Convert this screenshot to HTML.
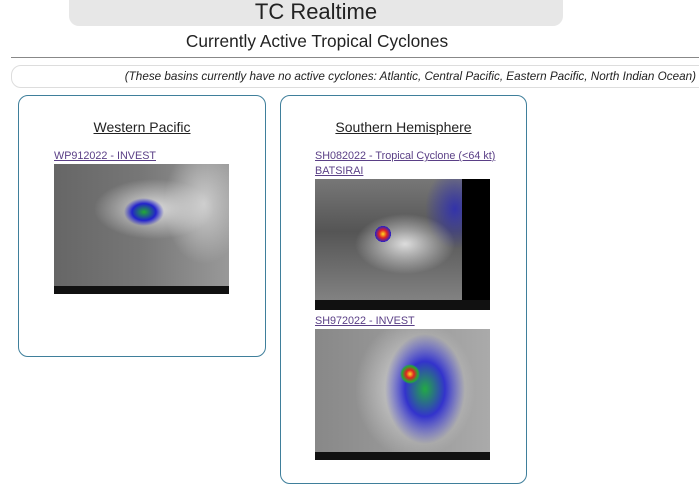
<!DOCTYPE html>
<html><head><style>
body{margin:0;width:699px;height:489px;background:#fff;font-family:"Liberation Sans",sans-serif;position:relative;overflow:hidden;color:#222}
.a{position:absolute}
.bar{left:69px;top:0;width:494px;height:26px;background:#e7e7e7;border-radius:0 0 10px 10px;text-align:center;font-size:22px;line-height:24px}
.sub{left:0;width:634px;top:31px;text-align:center;font-size:17.3px}
.hr{left:11px;top:57px;width:688px;height:1px;background:#888}
.note{left:11px;top:65px;width:700px;height:21px;border:1px solid #ddd;border-radius:10px;font-size:11.7px;font-style:italic;line-height:21px}
.note span{position:absolute;right:16px}
.card{border:1.5px solid #3f7f9b;border-radius:10px}
h2{position:absolute;margin:0;font-weight:normal;font-size:14px;text-decoration:underline;text-align:center;width:100%}
.lk{color:#5a3f86;text-decoration:underline;font-size:10.8px;line-height:15px}
.img{background:#555;overflow:hidden}
</style></head><body>
<div class="a bar">TC Realtime</div>
<div class="a sub">Currently Active Tropical Cyclones</div>
<div class="a hr"></div>
<div class="a note"><span>(These basins currently have no active cyclones: Atlantic, Central Pacific, Eastern Pacific, North Indian Ocean)</span></div>

<div class="a card" style="left:18px;top:95px;width:246px;height:260px"><h2 style="top:23px">Western Pacific</h2></div>
<div class="a lk" style="left:54px;top:149px">WP912022 - INVEST</div>
<div class="a img" style="left:54px;top:164px;width:175px;height:130px;background:radial-gradient(ellipse 20px 14px at 90px 48px,#2a3 0,#22c 60%,transparent 100%),radial-gradient(ellipse 60px 30px at 100px 45px,#ddd,transparent),radial-gradient(ellipse 40px 60px at 150px 40px,#ccc,transparent),linear-gradient(90deg,#666,#777 50%,#999);">
<div class="a" style="left:0;top:122px;width:175px;height:8px;background:#111"></div></div>

<div class="a card" style="left:280px;top:95px;width:245px;height:387px"><h2 style="top:23px">Southern Hemisphere</h2></div>
<div class="a lk" style="left:315px;top:149px">SH082022 - Tropical Cyclone (&lt;64 kt)<br>BATSIRAI</div>
<div class="a img" style="left:315px;top:179px;width:175px;height:131px;background:radial-gradient(circle 8px at 68px 55px,#fd2 0,#d22 50%,#22c 100%,transparent 101%),radial-gradient(ellipse 50px 30px at 90px 65px,#ddd,transparent),radial-gradient(ellipse 30px 40px at 140px 30px,#33a,transparent),linear-gradient(180deg,#777,#555 40%,#888);">
<div class="a" style="left:147px;top:0;width:28px;height:131px;background:#000"></div>
<div class="a" style="left:0;top:121px;width:175px;height:10px;background:#111"></div></div>

<div class="a lk" style="left:315px;top:314px">SH972022 - INVEST</div>
<div class="a img" style="left:315px;top:329px;width:175px;height:131px;background:radial-gradient(circle 10px at 95px 45px,#fd2 0,#d22 40%,#2a3 80%,transparent 100%),radial-gradient(ellipse 40px 55px at 110px 60px,#2a4 0,#33c 50%,transparent 100%),radial-gradient(ellipse 60px 70px at 100px 60px,#ddd,transparent),linear-gradient(90deg,#888,#aaa);">
<div class="a" style="left:0;top:123px;width:175px;height:8px;background:#111"></div></div>
</body></html>
